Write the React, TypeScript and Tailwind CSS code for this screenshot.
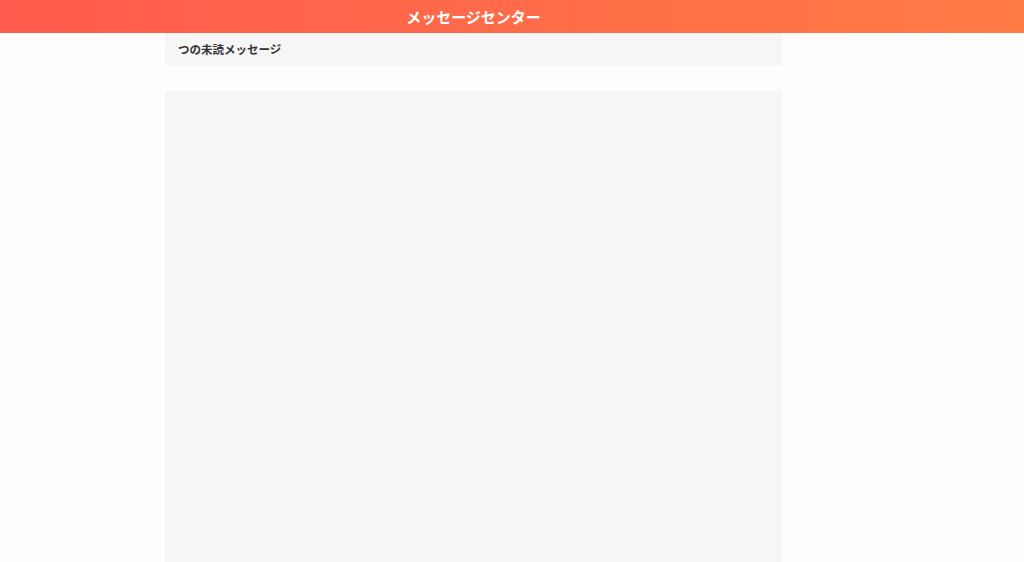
export default function App() {
  return (
    <div
      className="h-[562px] overflow-hidden bg-[#fffdfd] flex flex-col"
      style={{ fontFamily: '"Noto Sans CJK JP", "Noto Sans", sans-serif' }}
    >
      <header className="h-[33px] shrink-0 bg-gradient-to-r from-[#ff5a4d] to-[#ff7b44]">
        <div className="w-[617px] ml-[165px] h-full flex items-center justify-center">
          <h1 className="text-[15px] font-bold text-white leading-none">メッセージセンター</h1>
        </div>
      </header>

      <main className="w-[617px] ml-[165px] flex-1 flex flex-col">
        <div className="h-[33px] shrink-0 bg-[#f6f6f6] flex items-center px-[13px]">
          <span className="text-[11.5px] font-bold text-[#333]">つの未読メッセージ</span>
        </div>
        <div className="h-[25px] shrink-0" />
        <div className="flex-1 bg-[#f6f6f6]" />
      </main>
    </div>
  );
}
